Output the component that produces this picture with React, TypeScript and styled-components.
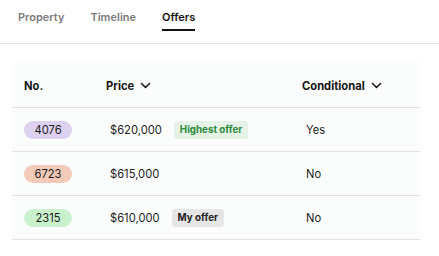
import styled, { createGlobalStyle } from "styled-components";

const GlobalStyle = createGlobalStyle`
  body {
    margin: 0;
    background: #ffffff;
    font-family: Inter, "Noto Sans", sans-serif;
    color: #1a1a1a;
  }
`;

type Offer = {
  id: string;
  tone: "lavender" | "peach" | "mint";
  price: string;
  tag?: "highest" | "mine";
  conditional: string;
};

const offers: Offer[] = [
  { id: "4076", tone: "lavender", price: "$620,000", tag: "highest", conditional: "Yes" },
  { id: "6723", tone: "peach", price: "$615,000", conditional: "No" },
  { id: "2315", tone: "mint", price: "$610,000", tag: "mine", conditional: "No" },
];

const pillColors = {
  lavender: "#dcd2f0",
  peach: "#f3cab7",
  mint: "#c9f2cc",
};

function Chevron() {
  return (
    <svg width="11" height="7" viewBox="0 0 11 7" fill="none">
      <path d="M1.5 1.5 L5.5 5.5 L9.5 1.5" stroke="#1a1a1a" strokeWidth="1.6" strokeLinecap="round" strokeLinejoin="round" />
    </svg>
  );
}

export default function App() {
  return (
    <>
      <GlobalStyle />
      <Page>
        <Tabs>
          <Tab>Property</Tab>
          <Tab>Timeline</Tab>
          <Tab $active>Offers</Tab>
        </Tabs>
        <Table>
          <HeaderRow>
            <HeadCell>No.</HeadCell>
            <HeadCell>
              Price <Chevron />
            </HeadCell>
            <HeadCell>
              Conditional <Chevron />
            </HeadCell>
          </HeaderRow>
          {offers.map((o) => (
            <Row key={o.id}>
              <Cell>
                <Pill $tone={o.tone}>{o.id}</Pill>
              </Cell>
              <ValueCell>
                {o.price}
                {o.tag === "highest" && <Badge $kind="highest">Highest offer</Badge>}
                {o.tag === "mine" && <Badge $kind="mine">My offer</Badge>}
              </ValueCell>
              <ValueCell>{o.conditional}</ValueCell>
            </Row>
          ))}
        </Table>
      </Page>
    </>
  );
}

const Page = styled.div`
  width: 439px;
  height: 256px;
  overflow: hidden;
`;

const Tabs = styled.div`
  display: flex;
  gap: 26px;
  height: 43px;
  padding-left: 18px;
  border-bottom: 1px solid #e6e6e6;
`;

const Tab = styled.div<{ $active?: boolean }>`
  box-sizing: border-box;
  height: 31px;
  padding-top: 10px;
  font-size: 11px;
  font-weight: 600;
  color: ${(p) => (p.$active ? "#111111" : "#7a7a7a")};
  border-bottom: 2px solid ${(p) => (p.$active ? "#111111" : "transparent")};
`;

const Table = styled.div`
  margin: 18px 18px 0 12px;
  background: #fbfcfc;
`;

const HeaderRow = styled.div`
  display: grid;
  grid-template-columns: 82px 196px 1fr;
  align-items: center;
  height: 45px;
  padding-left: 12px;
  border-bottom: 1px solid #e3e3e3;
`;

const HeadCell = styled.div`
  display: flex;
  align-items: center;
  gap: 6px;
  font-size: 11.2px;
  font-weight: 700;
  color: #161616;
  padding-top: 2px;
`;

const Row = styled(HeaderRow)`
  height: 43px;
`;

const Cell = styled.div`
  display: flex;
  align-items: center;
`;

const ValueCell = styled(Cell)`
  padding-left: 4px;
  gap: 12px;
  font-size: 11.2px;
  color: #1c1c1c;
`;

const Pill = styled.span<{ $tone: Offer["tone"] }>`
  display: inline-flex;
  align-items: center;
  justify-content: center;
  width: 48px;
  height: 18px;
  border-radius: 9px;
  background: ${(p) => pillColors[p.$tone]};
  font-size: 11.2px;
  color: #1c1c1c;
`;

const Badge = styled.span<{ $kind: "highest" | "mine" }>`
  display: inline-flex;
  align-items: center;
  height: 18px;
  padding: 0 6px;
  border-radius: 3px;
  font-size: 9.8px;
  font-weight: 700;
  background: ${(p) => (p.$kind === "highest" ? "#e6f2e7" : "#e6e6e6")};
  color: ${(p) => (p.$kind === "highest" ? "#2c8a3b" : "#222222")};
`;
